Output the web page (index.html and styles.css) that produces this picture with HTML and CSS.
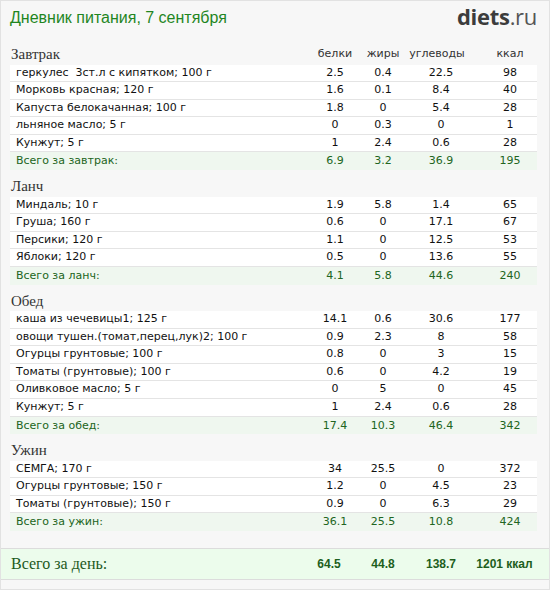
FILE: index.html
```html
<!DOCTYPE html>
<html lang="ru">
<head>
<meta charset="utf-8">
<title>Дневник питания</title>
<link rel="stylesheet" href="styles.css">
</head>
<body>
<div class="page">
  <div class="content">
    <div class="top">
      <h1 class="title">Дневник питания, 7 сентября</h1>
      <div class="logo"><span class="logo-main">diets</span><span class="logo-ru">.ru</span></div>
    </div>

    <div class="section">
      <div class="grid sec-head">
        <div class="sec-name">Завтрак</div>
        <div class="lbl">белки</div><div class="lbl">жиры</div><div class="lbl lbl-ug">углеводы</div><div class="lbl kk">ккал</div>
      </div>
      <div class="rows">
        <div class="grid row"><div class="name">геркулес&nbsp; 3ст.л с кипятком; 100 г</div><div>2.5</div><div>0.4</div><div>22.5</div><div class="kk">98</div></div>
        <div class="grid row"><div class="name">Морковь красная; 120 г</div><div>1.6</div><div>0.1</div><div>8.4</div><div class="kk">40</div></div>
        <div class="grid row"><div class="name">Капуста белокачанная; 100 г</div><div>1.8</div><div>0</div><div>5.4</div><div class="kk">28</div></div>
        <div class="grid row"><div class="name">льняное масло; 5 г</div><div>0</div><div>0.3</div><div>0</div><div class="kk">1</div></div>
        <div class="grid row"><div class="name">Кунжут; 5 г</div><div>1</div><div>2.4</div><div>0.6</div><div class="kk">28</div></div>
        <div class="grid row total"><div class="name">Всего за завтрак:</div><div>6.9</div><div>3.2</div><div>36.9</div><div class="kk">195</div></div>
      </div>
    </div>

    <div class="section">
      <div class="grid sec-head">
        <div class="sec-name">Ланч</div>
      </div>
      <div class="rows">
        <div class="grid row"><div class="name">Миндаль; 10 г</div><div>1.9</div><div>5.8</div><div>1.4</div><div class="kk">65</div></div>
        <div class="grid row"><div class="name">Груша; 160 г</div><div>0.6</div><div>0</div><div>17.1</div><div class="kk">67</div></div>
        <div class="grid row"><div class="name">Персики; 120 г</div><div>1.1</div><div>0</div><div>12.5</div><div class="kk">53</div></div>
        <div class="grid row"><div class="name">Яблоки; 120 г</div><div>0.5</div><div>0</div><div>13.6</div><div class="kk">55</div></div>
        <div class="grid row total"><div class="name">Всего за ланч:</div><div>4.1</div><div>5.8</div><div>44.6</div><div class="kk">240</div></div>
      </div>
    </div>

    <div class="section">
      <div class="grid sec-head">
        <div class="sec-name">Обед</div>
      </div>
      <div class="rows">
        <div class="grid row"><div class="name">каша из чечевицы1; 125 г</div><div>14.1</div><div>0.6</div><div>30.6</div><div class="kk">177</div></div>
        <div class="grid row"><div class="name">овощи тушен.(томат,перец,лук)2; 100 г</div><div>0.9</div><div>2.3</div><div>8</div><div class="kk">58</div></div>
        <div class="grid row"><div class="name">Огурцы грунтовые; 100 г</div><div>0.8</div><div>0</div><div>3</div><div class="kk">15</div></div>
        <div class="grid row"><div class="name">Томаты (грунтовые); 100 г</div><div>0.6</div><div>0</div><div>4.2</div><div class="kk">19</div></div>
        <div class="grid row"><div class="name">Оливковое масло; 5 г</div><div>0</div><div>5</div><div>0</div><div class="kk">45</div></div>
        <div class="grid row"><div class="name">Кунжут; 5 г</div><div>1</div><div>2.4</div><div>0.6</div><div class="kk">28</div></div>
        <div class="grid row total"><div class="name">Всего за обед:</div><div>17.4</div><div>10.3</div><div>46.4</div><div class="kk">342</div></div>
      </div>
    </div>

    <div class="section">
      <div class="grid sec-head">
        <div class="sec-name">Ужин</div>
      </div>
      <div class="rows">
        <div class="grid row"><div class="name">СЕМГА; 170 г</div><div>34</div><div>25.5</div><div>0</div><div class="kk">372</div></div>
        <div class="grid row"><div class="name">Огурцы грунтовые; 150 г</div><div>1.2</div><div>0</div><div>4.5</div><div class="kk">23</div></div>
        <div class="grid row"><div class="name">Томаты (грунтовые); 150 г</div><div>0.9</div><div>0</div><div>6.3</div><div class="kk">29</div></div>
        <div class="grid row total"><div class="name">Всего за ужин:</div><div>36.1</div><div>25.5</div><div>10.8</div><div class="kk">424</div></div>
      </div>
    </div>
  </div>

  <div class="day-total">
    <div class="grid day-grid">
      <div class="day-label">Всего за день:</div>
      <div class="day-b">64.5</div><div>44.8</div><div>138.7</div><div class="kk">1201 ккал</div>
    </div>
  </div>
</div>
</body>
</html>
```

FILE: styles.css
```css
html, body {
  margin: 0;
  padding: 0;
  background: #f7f7f7;
}

.page {
  box-sizing: border-box;
  width: 550px;
  height: 590px;
  border: 1px solid #e2e2e2;
  background: #f7f7f7;
  overflow: hidden;
}

.content {
  padding: 0 12px 0 9px;
}

.top {
  height: 37px;
  display: flex;
  justify-content: space-between;
  align-items: flex-start;
}

.title {
  margin: 7px 0 0 0;
  font-family: "Liberation Sans", Arial, sans-serif;
  font-weight: normal;
  font-size: 16px;
  line-height: 19px;
  color: #1f861f;
}

.logo {
  margin-top: 1px;
  font-family: "Open Sans", sans-serif;
  font-size: 22px;
  line-height: 28px;
  letter-spacing: -0.3px;
}

.logo-main {
  font-weight: 700;
  color: #3c3c3c;
}

.logo-ru {
  font-weight: 400;
  color: #555;
}

.grid {
  display: grid;
  grid-template-columns: 300px 50px 46px 70px 61px;
  text-align: center;
}

.sec-head {
  height: 26.5px;
  box-sizing: border-box;
  padding-bottom: 1.5px;
  align-items: end;
  font-family: "DejaVu Sans", Verdana, sans-serif;
  font-size: 11px;
  line-height: 18px;
  color: #333;
}

.sec-name {
  text-align: left;
  font-family: "Liberation Serif", "Times New Roman", serif;
  font-size: 15px;
  color: #333;
  padding-left: 1px;
}

.lbl-ug {
  padding-right: 8px;
}

.kk {
  padding-left: 7px;
}

.rows {
  font-family: "DejaVu Sans", Verdana, sans-serif;
  font-size: 11px;
  color: #111;
}

.row {
  background: #fff;
  border-bottom: 1px solid #e4e4e4;
  line-height: 16.6px;
}

.row .name {
  text-align: left;
  padding-left: 6px;
  white-space: nowrap;
}

.row.total {
  background: #eff7ef;
  color: #216521;
  border-bottom: none;
  line-height: 17.6px;
}

.day-total {
  margin-top: 17px;
  border-top: 1px solid #dcdcdc;
  border-bottom: 1px solid #dcdcdc;
  background: #ecfcec;
  height: 30px;
  padding: 0 12px 0 9px;
}

.day-grid {
  height: 30px;
  align-items: center;
  font-family: "Liberation Sans", Arial, sans-serif;
  font-weight: bold;
  font-size: 12px;
  color: #1d5f1d;
}

.day-label {
  text-align: left;
  font-family: "Liberation Serif", "Times New Roman", serif;
  font-weight: normal;
  font-size: 16px;
  color: #1d5a1d;
  padding-left: 1px;
}

.day-b {
  padding-right: 12px;
}

.day-grid .kk {
  padding-left: 0;
  padding-right: 4px;
  white-space: nowrap;
}
```
